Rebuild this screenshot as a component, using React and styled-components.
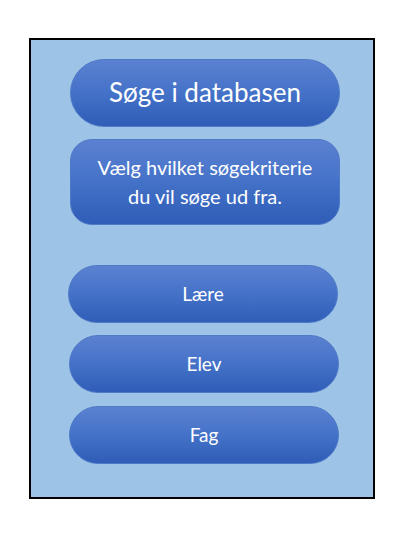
import { createGlobalStyle, styled } from "styled-components";

const GlobalStyle = createGlobalStyle`
  body {
    margin: 0;
    background: #fff;
    font-family: Lato, "Open Sans", sans-serif;
  }
`;

const Frame = styled.div`
  box-sizing: border-box;
  margin: 38px 0 0 29px;
  width: 346px;
  height: 461px;
  border: 2px solid #000;
  background: #9dc3e6;
  padding: 19px 0 0 37px;
  display: flex;
  flex-direction: column;
  align-items: flex-start;
`;

const Shape = styled.div`
  box-sizing: border-box;
  width: 270px;
  height: ${(p) => p.$h}px;
  margin-top: ${(p) => p.$gap}px;
  margin-left: ${(p) => p.$shift || 0}px;
  border-radius: ${(p) => p.$radius}px;
  border: 1px solid #5079c8;
  background: linear-gradient(#5b81d1 0%, #4472c8 50%, #2f5db7 100%);
  color: #fff;
  display: flex;
  align-items: center;
  justify-content: center;
  text-align: center;
  font-size: ${(p) => p.$size}px;
  line-height: ${(p) => p.$lh || 1.2};
`;

const App = () => {
  return (
    <>
      <GlobalStyle />
      <Frame>
        <Shape $h={68} $gap={0} $shift={2} $radius={34} $size={26}>
          Søge i databasen
        </Shape>
        <Shape $h={86} $gap={12} $shift={2} $radius={22} $size={20} $lh={1.45}>
          Vælg hvilket søgekriterie
          <br />
          du vil søge ud fra.
        </Shape>
        <Shape $h={58} $gap={40} $radius={29} $size={19}>
          Lære
        </Shape>
        <Shape $h={58} $gap={12} $shift={1} $radius={29} $size={19}>
          Elev
        </Shape>
        <Shape $h={58} $gap={13} $shift={1} $radius={29} $size={19}>
          Fag
        </Shape>
      </Frame>
    </>
  );
};

export default App;
